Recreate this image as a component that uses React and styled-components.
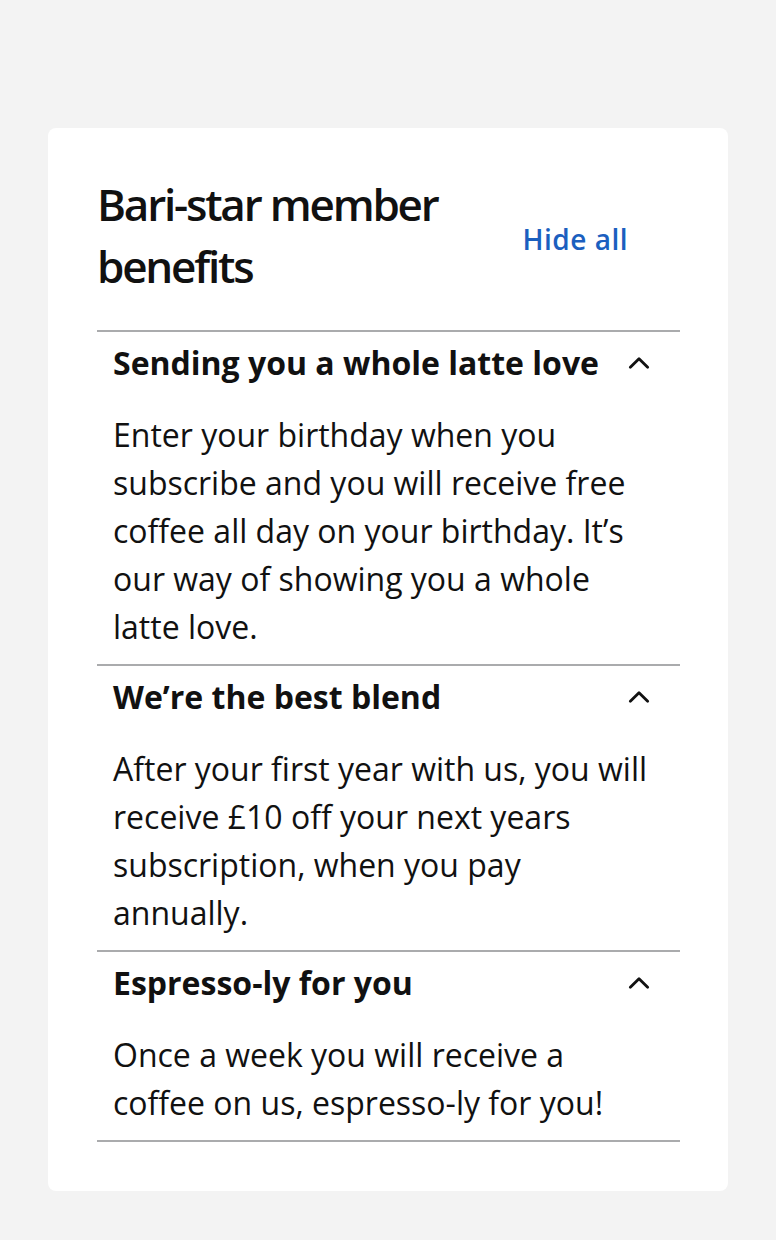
import React, { useState } from "react";
import styled, { createGlobalStyle } from "styled-components";

const GlobalStyle = createGlobalStyle`
  html, body {
    margin: 0;
    padding: 0;
    background: #f3f3f3;
  }
  body {
    font-family: "Open Sans", "Noto Sans", sans-serif;
    color: #111;
  }
`;

const Page = styled.div`
  padding: 128px 48px 48px;
`;

const Card = styled.section`
  background: #fff;
  border-radius: 8px;
  padding: 45px 48px 49px 49px;
`;

const Header = styled.div`
  display: flex;
  align-items: center;
  justify-content: space-between;
  margin-bottom: 33px;
`;

const Title = styled.h2`
  margin: 0;
  font-size: 44px;
  font-weight: 600;
  letter-spacing: -2.2px;
  line-height: 62px;
  width: 380px;
`;

const HideButton = styled.button`
  border: none;
  background: none;
  padding: 0;
  margin: 8px 52px 0 0;
  font-family: inherit;
  font-size: 28px;
  font-weight: 600;
  letter-spacing: 0.5px;
  color: #1b5fbf;
  cursor: pointer;
`;

const List = styled.div`
  border-top: 2px solid #aaabad;
`;

const Item = styled.div`
  border-bottom: 2px solid #aaabad;
  padding: 11px 28px 13px 16px;
`;

const ItemHead = styled.button`
  display: flex;
  width: 100%;
  align-items: center;
  justify-content: space-between;
  border: none;
  background: none;
  padding: 0;
  font-family: inherit;
  font-size: 32px;
  font-weight: 700;
  line-height: 40px;
  color: #111;
  text-align: left;
  cursor: pointer;
`;

const Chevron = styled.svg`
  width: 26px;
  height: 26px;
  flex: none;
  transform: rotate(${(p) => (p.open ? 0 : 180)}deg);
`;

const Body = styled.p`
  margin: 28px 0 0;
  font-size: 32px;
  line-height: 48px;
`;

const benefits = [
  {
    title: "Sending you a whole latte love",
    text: "Enter your birthday when you subscribe and you will receive free coffee all day on your birthday. It\u2019s our way of showing you a whole latte love.",
  },
  {
    title: "We\u2019re the best blend",
    text: "After your first year with us, you will receive \u00a310 off your next years subscription, when you pay annually.",
  },
  {
    title: "Espresso-ly for you",
    text: "Once a week you will receive a coffee on us, espresso-ly for you!",
  },
];

export default function App() {
  const [open, setOpen] = useState([true, true, true]);
  const allOpen = open.every(Boolean);

  return (
    <Page>
      <GlobalStyle />
      <Card>
        <Header>
          <Title>Bari-star member benefits</Title>
          <HideButton onClick={() => setOpen(open.map(() => !allOpen))}>
            {allOpen ? "Hide all" : "Show all"}
          </HideButton>
        </Header>
        <List>
          {benefits.map((b, i) => (
            <Item key={b.title}>
              <ItemHead
                onClick={() => setOpen(open.map((o, j) => (j === i ? !o : o)))}
              >
                {b.title}
                <Chevron viewBox="0 0 24 24" open={open[i]}>
                  <path
                    d="M4 16l8-8 8 8"
                    fill="none"
                    stroke="#111"
                    strokeWidth="2.6"
                    strokeLinecap="round"
                    strokeLinejoin="round"
                  />
                </Chevron>
              </ItemHead>
              {open[i] && <Body>{b.text}</Body>}
            </Item>
          ))}
        </List>
      </Card>
    </Page>
  );
}
